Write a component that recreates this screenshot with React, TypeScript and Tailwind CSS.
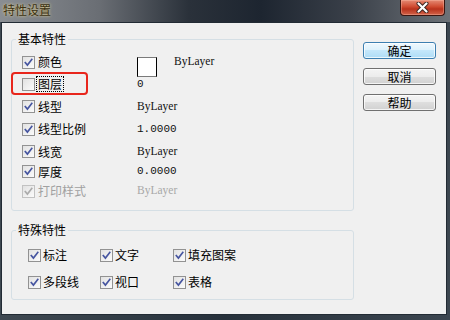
import React from 'react';

const cjk = "font-['Noto_Sans_CJK_SC','Microsoft_YaHei',sans-serif]";

const CheckBox: React.FC<{ checked?: boolean; disabled?: boolean }> = ({ checked = true, disabled = false }) => (
  <span
    className={`flex h-[13px] w-[13px] shrink-0 items-center justify-center border ${
      disabled ? 'border-[#c2c2c2]' : 'border-[#929292]'
    } bg-gradient-to-br from-[#e2e2e2] to-[#fbfbfb]`}
  >
    {checked && (
      <svg width="11" height="11" viewBox="0 0 11 11">
        <path
          d="M2.3 5.6 L4.4 8.1 L8.8 2.4"
          fill="none"
          stroke={disabled ? '#ababab' : '#4655a0'}
          strokeWidth="1.6"
          strokeLinecap="square"
        />
      </svg>
    )}
  </span>
);

const Button: React.FC<{ label: string; primary?: boolean }> = ({ label, primary }) => (
  <button
    className={`h-[17px] w-[73px] rounded-[3px] border text-[12px] leading-none text-black shadow-[inset_0_0_0_1px_rgba(255,255,255,0.75)] ${cjk} ${
      primary
        ? 'border-[#3c7fb1] bg-[linear-gradient(#eef8fe_0%,#dcf1fc_50%,#c4e7fb_50%,#aedcf6_100%)]'
        : 'border-[#707070] bg-[linear-gradient(#f4f4f4_0%,#ececec_50%,#dedede_50%,#d1d1d1_100%)]'
    }`}
  >
    {label}
  </button>
);

const serif = "font-['Liberation_Serif',serif] text-[11.5px] leading-none text-[#111]";
const mono = "font-['Liberation_Mono',monospace] text-[11px] leading-none text-[#111]";

type Row = {
  label: string;
  h: string;
  checked?: boolean;
  disabled?: boolean;
  focused?: boolean;
  value: React.ReactNode;
};

const basicRows: Row[] = [
  {
    label: '颜色',
    h: 'h-[22px]',
    value: (
      <div className="flex h-full items-start">
        <span className="mt-[6px] h-[20px] w-[20px] border border-black border-t-[#7a7a7a] border-b-[#7a7a7a] bg-white" />
        <span className={`${serif} ml-[17px] self-center`}>ByLayer</span>
      </div>
    ),
  },
  { label: '图层', h: 'h-[22px]', checked: false, focused: true, value: <span className={mono}>0</span> },
  { label: '线型', h: 'h-[23px]', value: <span className={serif}>ByLayer</span> },
  { label: '线型比例', h: 'h-[22px]', value: <span className={mono}>1.0000</span> },
  { label: '线宽', h: 'h-[23px]', value: <span className={serif}>ByLayer</span> },
  { label: '厚度', h: 'h-[17px]', value: <span className={mono}>0.0000</span> },
  {
    label: '打印样式',
    h: 'h-[22px]',
    disabled: true,
    value: <span className={`${serif} !text-[#a8a8a8]`}>ByLayer</span>,
  },
];

const special = [
  ['标注', '文字', '填充图案'],
  ['多段线', '视口', '表格'],
];

const Legend: React.FC<{ text: string }> = ({ text }) => (
  <legend className={`ml-[4px] px-[2px] text-[12px] leading-[16px] text-black ${cjk}`}>{text}</legend>
);

export default function App() {
  return (
    <div className="relative h-[320px] w-[450px] overflow-hidden bg-[linear-gradient(90deg,#3f4952,#27313b_50%,#3c4650)]">
      {/* title bar */}
      <div className="flex h-[22px] justify-between bg-[linear-gradient(90deg,#8a8e93_0%,#6a6e74_22%,#2a313a_42%,#1d2530_58%,#3a4049_78%,#6d7278_100%)]">
        <span
          className={`pl-[3px] pt-[2px] text-[12px] leading-[16px] text-[#3a3012] [text-shadow:0_0_3px_rgba(255,232,150,0.95)] ${cjk}`}
        >
          特性设置
        </span>
        <div className="mr-[5px] flex h-[16px] w-[45px] items-center justify-center rounded-b-[4px] border border-t-0 border-[#3b1510] bg-[linear-gradient(#e58a74_0%,#cf4a30_45%,#b8321c_60%,#d2634a_100%)] shadow-[inset_0_0_0_1px_rgba(255,200,180,0.35)]">
          <svg width="13" height="11" viewBox="0 0 13 11">
            <path d="M2.5 1.5 L10.5 9.5 M10.5 1.5 L2.5 9.5" stroke="#3a2420" strokeWidth="4" strokeLinecap="round" />
            <path d="M2.5 1.5 L10.5 9.5 M10.5 1.5 L2.5 9.5" stroke="#ffffff" strokeWidth="2.2" strokeLinecap="round" />
          </svg>
        </div>
      </div>

      {/* client area */}
      <div className="ml-[1px] flex h-[293px] w-[446px] border border-[#222b34] bg-[#f0f0f0]">
        <div className="ml-[9px] flex w-[343px] flex-col">
          <fieldset className="mt-[8px] rounded-[3px] border border-[#d5dfe5] px-0">
            <Legend text="基本特性" />
            <div className="flex flex-col pb-[8px] pl-[10px] pt-[4px]">
              {basicRows.map((r) => (
                <div key={r.label} className={`flex items-center ${r.h}`}>
                  <div className="flex w-[115px] items-center gap-[1px]">
                    <CheckBox checked={r.checked !== false} disabled={r.disabled} />
                    <span
                      className={`border px-[1px] text-[12px] leading-[14px] ${cjk} ${
                        r.focused ? 'border-dotted border-black' : 'border-transparent'
                      } ${r.disabled ? 'text-[#a0a0a0]' : 'text-black'}`}
                    >
                      {r.label}
                    </span>
                  </div>
                  <div className="flex h-full items-center">{r.value}</div>
                </div>
              ))}
            </div>
          </fieldset>

          <fieldset className="mt-[11px] rounded-[3px] border border-[#d5dfe5] px-0">
            <Legend text="特殊特性" />
            <div className="flex flex-col gap-[5px] pb-[6px] pl-[16px] pt-[6px]">
              {special.map((line, i) => (
                <div key={i} className="grid h-[22px] grid-cols-[72px_73px_auto] items-center">
                  {line.map((t) => (
                    <div key={t} className="flex items-center gap-[2px]">
                      <CheckBox />
                      <span className={`text-[12px] leading-[14px] text-black ${cjk}`}>{t}</span>
                    </div>
                  ))}
                </div>
              ))}
            </div>
          </fieldset>
        </div>

        <div className="ml-[9px] mt-[19px] flex flex-col gap-[9px]">
          <Button label="确定" primary />
          <Button label="取消" />
          <Button label="帮助" />
        </div>
      </div>

      {/* red annotation box */}
      <div className="pointer-events-none absolute left-[11px] top-[72px] h-[23px] w-[77px] rounded-[4px] border-2 border-[#e8261c]" />
    </div>
  );
}
